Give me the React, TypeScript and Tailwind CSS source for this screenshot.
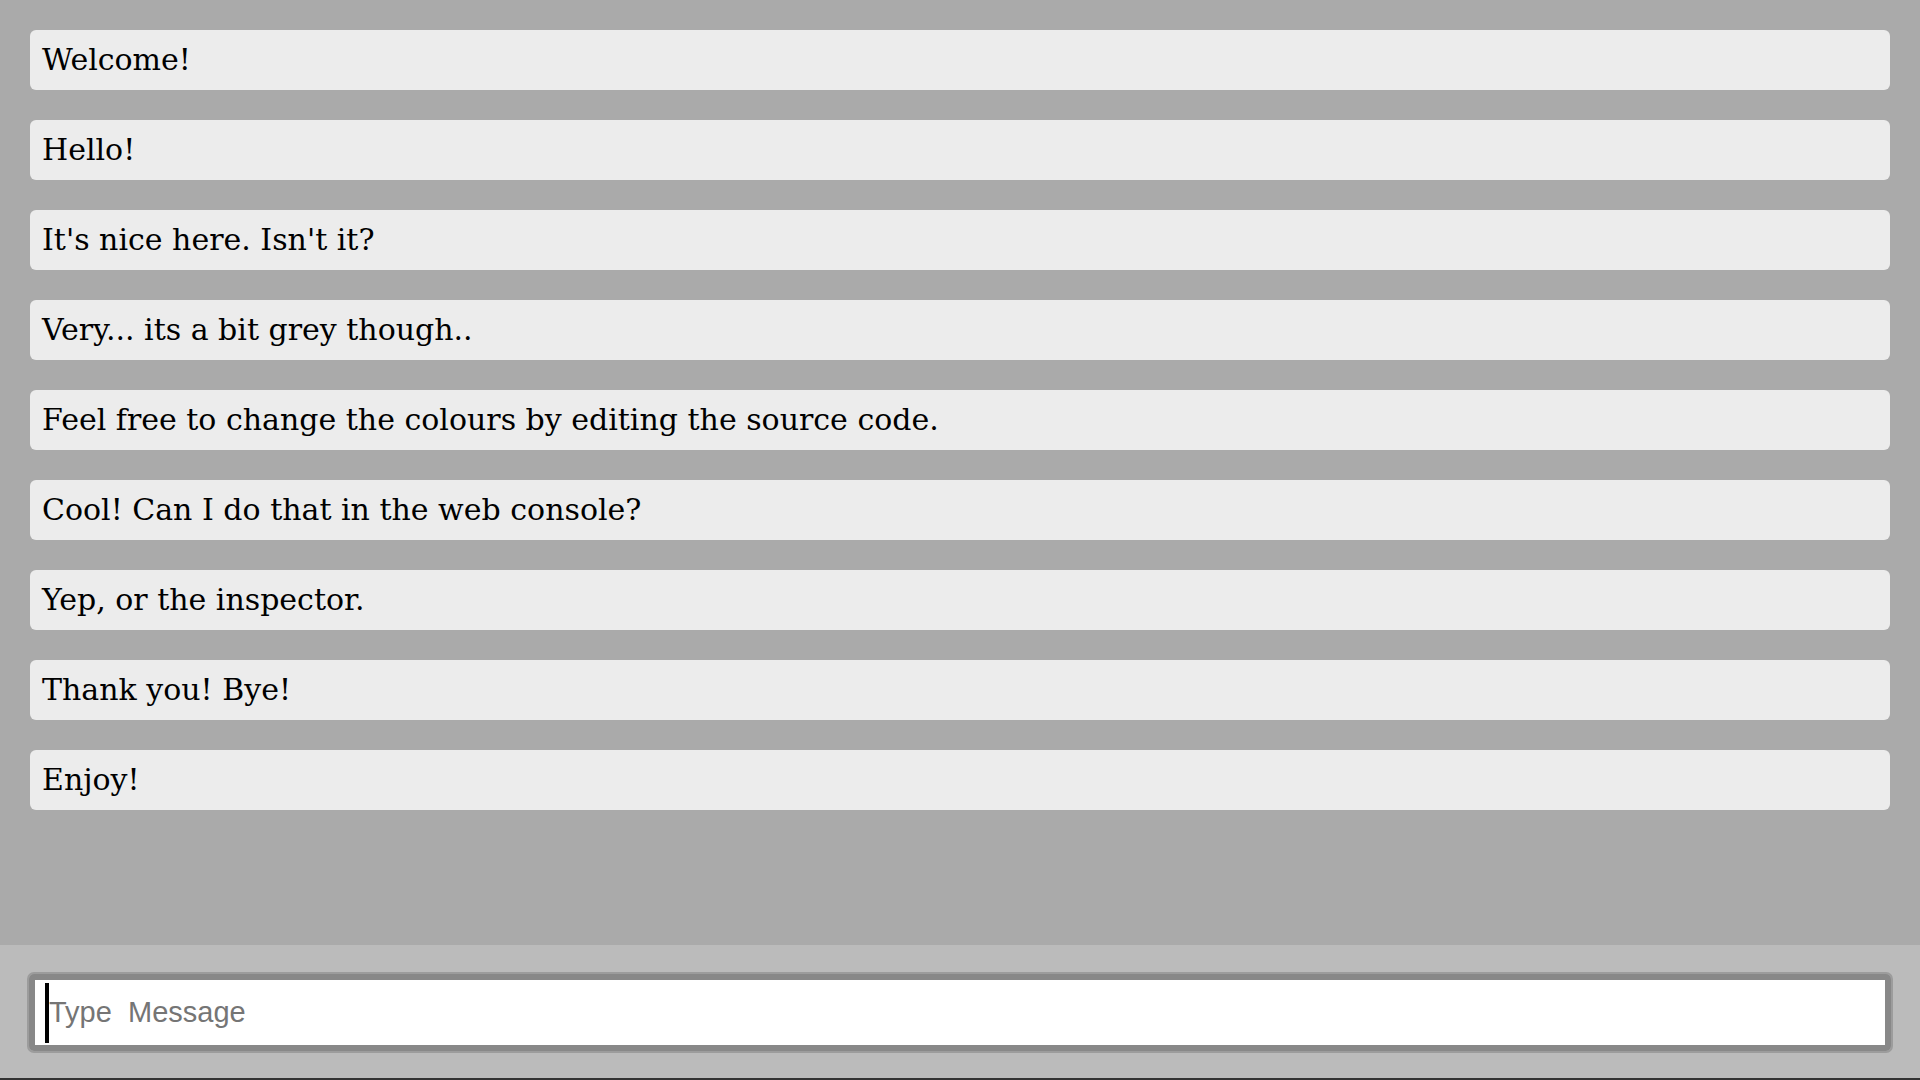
const messages = [
  "Welcome!",
  "Hello!",
  "It's nice here. Isn't it?",
  "Very... its a bit grey though..",
  "Feel free to change the colours by editing the source code.",
  "Cool! Can I do that in the web console?",
  "Yep, or the inspector.",
  "Thank you! Bye!",
  "Enjoy!",
];

const App = () => {
  return (
    <div className="flex flex-col h-screen w-full overflow-hidden bg-[#aaaaaa]">
      <div className="flex-1 flex flex-col gap-[30px] p-[30px]">
        {messages.map((m) => (
          <div
            key={m}
            className="h-[60px] flex items-center px-[12px] pb-[2px] rounded-[6px] bg-[#ececec] text-black text-[30px] font-['DejaVu_Serif',serif]"
          >
            {m}
          </div>
        ))}
      </div>

      <div className="h-[135px] bg-[#bbbbbb] pt-[27px] px-[27px] border-b-2 border-[#333]">
        <div className="h-[81px] rounded-[7px] border-2 border-[#9c9c9c]">
          <div className="h-full flex items-center rounded-[5px] border-[6px] border-[#888888] bg-white pl-[10px]">
            <div className="w-[4px] h-[60px] bg-black shrink-0" />
            <input
              className="flex-1 h-full outline-none bg-transparent text-[29px] text-black placeholder:text-[#757575] font-['Liberation_Sans',Arial,sans-serif]"
              placeholder="Type  Message"
            />
          </div>
        </div>
      </div>
    </div>
  );
};

export default App;
